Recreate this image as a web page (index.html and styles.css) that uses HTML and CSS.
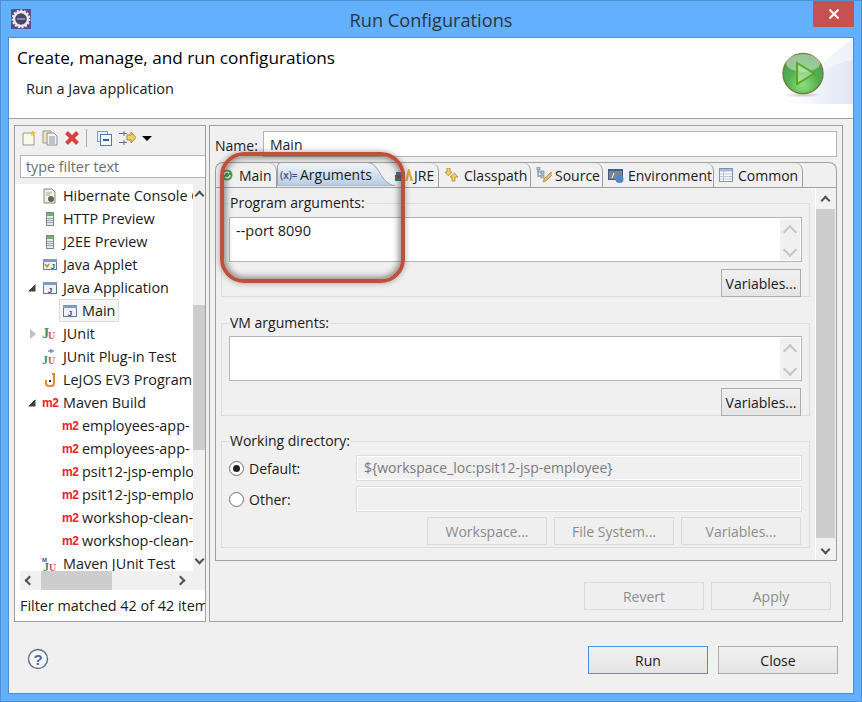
FILE: index.html
```html
<!DOCTYPE html>
<html lang="en">
<head>
    <meta charset="UTF-8">
    <title>Run Configurations</title>
    <link rel="stylesheet" href="styles.css">
</head>
<body>
<svg class="defs" width="0" height="0">
    <defs>
        <symbol id="i-java" viewBox="0 0 16 16">
            <rect x="1.500" y="2.500" width="13" height="11" fill="#eef2f8" stroke="#5f7896"/>
            <rect x="1" y="2" width="14" height="3" fill="#7f9cc0"/>
            <text x="8" y="12.500" font-size="8" font-weight="700" text-anchor="middle" fill="#2f4f7f" font-family="Liberation Sans">J</text>
        </symbol>
        <symbol id="i-server" viewBox="0 0 16 16">
            <rect x="4.500" y="1.500" width="7" height="13" fill="#e4e8ec" stroke="#7a8a80"/>
            <rect x="5" y="2" width="6" height="3" fill="#6cb26c"/>
            <path d="M5 7.500h6M5 9.500h6M5 11.500h6" stroke="#9aa6b2"/>
        </symbol>
        <symbol id="i-junit" viewBox="0 0 16 16">
            <text x="0" y="12" font-size="14" font-weight="700" fill="#3d8f5f" font-family="Liberation Serif">J</text>
            <text x="6" y="13" font-size="10" font-weight="700" fill="#d8505a" font-family="Liberation Serif">U</text>
        </symbol>
    </defs>
</svg>

<div class="window">
    <div class="titlebar">
        <svg width="20" height="20" viewBox="0 0 20 20">
            <rect width="20" height="20" fill="#5a4a86"/>
            <circle cx="10" cy="10" r="7" fill="#4a4468" stroke="#e8e8e8" stroke-width="2.400"/>
            <circle cx="10" cy="10" r="8.600" fill="none" stroke="#f4f4f4" stroke-width="1.600" stroke-dasharray="2 1.600"/>
            <rect x="6" y="9" width="8" height="2" fill="#8d86ac"/>
        </svg>
        <div class="title">Run Configurations</div>
        <div class="close">
            <svg width="10" height="10" viewBox="0 0 10 10"><path d="M0.500 0.500l9 9M9.500 0.500l-9 9" stroke="#fff" stroke-width="2"/></svg>
        </div>
    </div>

    <div class="client">
        <div class="header">
            <svg class="header-bg" width="74" height="66" viewBox="0 0 74 66">
                <defs>
                    <linearGradient id="hb" x1="0" y1="0" x2="1" y2="0">
                        <stop offset="0" stop-color="#fff"/>
                        <stop offset="1" stop-color="#dfe5f4"/>
                    </linearGradient>
                </defs>
                <path d="M0 66C20 50 44 22 74 0V66z" fill="url(#hb)" opacity=".55"/>
                <path d="M10 66C24 50 44 26 74 22V66z" fill="url(#hb)"/>
            </svg>
            <svg class="run-icon" width="44" height="50" viewBox="0 0 44 50">
                <defs>
                    <radialGradient id="rg" cx=".5" cy=".78" r=".8">
                        <stop offset="0" stop-color="#8fe07e"/>
                        <stop offset=".5" stop-color="#4fb04f"/>
                        <stop offset="1" stop-color="#57985a"/>
                    </radialGradient>
                    <radialGradient id="rs" cx=".5" cy=".5" r=".5">
                        <stop offset="0" stop-color="#999" stop-opacity=".55"/>
                        <stop offset="1" stop-color="#999" stop-opacity="0"/>
                    </radialGradient>
                </defs>
                <ellipse cx="22" cy="43" rx="20" ry="2.500" fill="url(#rs)"/>
                <circle cx="22" cy="21.500" r="20" fill="url(#rg)" stroke="#6f7f3a" stroke-width="1.400"/>
                <ellipse cx="22" cy="11" rx="17" ry="9" fill="#fff" opacity=".4"/>
                <path d="M16 11L33 21.500 16 32z" fill="#c2ecae" fill-opacity=".55" stroke="#5ea52e" stroke-width="2"/>
            </svg>
            <div class="header-title">Create, manage, and run configurations</div>
            <div class="header-sub">Run a Java application</div>
        </div>

        <div class="main">
            <div class="sidebar">
                <div class="toolbar">
                    <svg width="16" height="16" viewBox="0 0 16 16">
                        <path d="M2 3h8l3 3v9H2z" fill="#fbf8ec" stroke="#9a9a88"/>
                        <path d="M12 0l1 2 2 .5-1.500 1.500.3 2-1.800-1-1.800 1 .3-2L9 2.500l2-.5z" fill="#e9c04a"/>
                    </svg>
                    <svg class="t-dup" width="16" height="16" viewBox="0 0 16 16">
                        <path d="M1 1h8v12H1z" fill="#efe6c6" stroke="#a09a80"/>
                        <path d="M5 3h7l3 3v9H5z" fill="#f6f4ea" stroke="#8a8e9a"/>
                        <path d="M7 7h6M7 9h6M7 11h6M7 13h6" stroke="#7f93b4"/>
                    </svg>
                    <svg class="t-del" width="16" height="16" viewBox="0 0 16 16">
                        <path d="M2.500 2.500l11 11M13.500 2.500l-11 11" stroke="#d9403f" stroke-width="4"/>
                    </svg>
                    <span class="t-sep"></span>
                    <svg class="t-col" width="15" height="15" viewBox="0 0 15 15">
                        <rect x="0.500" y="0.500" width="10" height="10" fill="#e8f0f8" stroke="#7f9cc0"/>
                        <rect x="3.500" y="3.500" width="11" height="11" fill="#f4f8fc" stroke="#4f78a8"/>
                        <path d="M6 9h6" stroke="#2f5f98" stroke-width="2"/>
                    </svg>
                    <svg class="t-filter" width="17" height="16" viewBox="0 0 17 16">
                        <path d="M0 3.500h8M0 12.500h8" stroke="#5a7394"/>
                        <path d="M5 1v5M5 10v5" stroke="#5a7394"/>
                        <path d="M8 5h4V2l5 5.500-5 5.500v-3H8z" fill="#f3cf6a" stroke="#a98a2a"/>
                    </svg>
                    <span class="t-drop"></span>
                </div>
                <div class="filter-bar">
                    <div class="filter-box">type filter text</div>
                </div>
                <div class="tree-wrap">
                    <div class="tree">
                        <div class="row l1"><span class="twist"></span><span class="row-label"><svg width="16" height="16" viewBox="0 0 16 16"><path d="M2 1h8l3 3v11H2z" fill="#f4f1e4" stroke="#8a8a78"/><path d="M4 5h6M4 7h4" stroke="#9aa6b2"/><circle cx="9" cy="11" r="3" fill="#5a6a58"/></svg>Hibernate Console Configuration</span></div>
                        <div class="row l1"><span class="twist"></span><span class="row-label"><svg width="16" height="16"><use href="#i-server"/></svg>HTTP Preview</span></div>
                        <div class="row l1"><span class="twist"></span><span class="row-label"><svg width="16" height="16"><use href="#i-server"/></svg>J2EE Preview</span></div>
                        <div class="row l1"><span class="twist"></span><span class="row-label"><svg width="16" height="16" viewBox="0 0 16 16"><rect x="1.500" y="2.500" width="13" height="10" fill="#f2f0e6" stroke="#5f7896"/><rect x="1" y="2" width="14" height="3" fill="#7f9cc0"/><path d="M3 7l2 3 2-3" fill="none" stroke="#c08a3a" stroke-width="1.500"/><text x="11" y="12" font-size="7" font-weight="700" text-anchor="middle" fill="#2f4f7f" font-family="Liberation Sans">J</text></svg>Java Applet</span></div>
                        <div class="row l1"><span class="twist open"></span><span class="row-label"><svg width="16" height="16"><use href="#i-java"/></svg>Java Application</span></div>
                        <div class="row l2"><span class="row-label sel"><svg width="16" height="16"><use href="#i-java"/></svg>Main</span></div>
                        <div class="row l1"><span class="twist closed"></span><span class="row-label"><svg width="16" height="16"><use href="#i-junit"/></svg>JUnit</span></div>
                        <div class="row l1"><span class="twist"></span><span class="row-label"><svg width="16" height="16" viewBox="0 0 16 16"><path d="M6 2h6M9 0v4" stroke="#6f8fc0" stroke-width="1.500"/><text x="0" y="15" font-size="12" font-weight="700" fill="#3d8f5f" font-family="Liberation Serif">J</text><text x="6" y="15" font-size="10" font-weight="700" fill="#d8505a" font-family="Liberation Serif">U</text></svg>JUnit Plug-in Test</span></div>
                        <div class="row l1"><span class="twist"></span><span class="row-label"><svg width="16" height="16" viewBox="0 0 16 16"><path d="M10 2h2v9a3 3 0 0 1-3 3H7a3 3 0 0 1-3-3V8" fill="none" stroke="#e8862a" stroke-width="2"/><rect x="7" y="8" width="2" height="2" fill="#333"/></svg>LeJOS EV3 Program</span></div>
                        <div class="row l1"><span class="twist open"></span><span class="row-label"><span class="m2">m2</span>Maven Build</span></div>
                        <div class="row l2"><span class="row-label"><span class="m2">m2</span>employees-app-</span></div>
                        <div class="row l2"><span class="row-label"><span class="m2">m2</span>employees-app-</span></div>
                        <div class="row l2"><span class="row-label"><span class="m2">m2</span>psit12-jsp-employee</span></div>
                        <div class="row l2"><span class="row-label"><span class="m2">m2</span>psit12-jsp-employee</span></div>
                        <div class="row l2"><span class="row-label"><span class="m2">m2</span>workshop-clean-</span></div>
                        <div class="row l2"><span class="row-label"><span class="m2">m2</span>workshop-clean-</span></div>
                        <div class="row l1"><span class="twist"></span><span class="row-label"><svg width="16" height="16" viewBox="0 0 16 16"><text x="0" y="6" font-size="6" font-weight="700" fill="#34548c" font-family="Liberation Sans">M</text><text x="1" y="15" font-size="12" font-weight="700" fill="#3d8f5f" font-family="Liberation Serif">J</text><text x="7" y="15" font-size="10" font-weight="700" fill="#d8505a" font-family="Liberation Serif">U</text></svg>Maven JUnit Test</span></div>
                    </div>
                    <div class="tree-vscroll">
                        <span class="chev up"></span>
                        <span class="tree-thumb"></span>
                        <span class="chev down"></span>
                    </div>
                </div>
                <div class="hscroll">
                    <span class="chev left"></span>
                    <span class="hthumb"></span>
                    <span class="chev right"></span>
                </div>
                <div class="status">Filter matched 42 of 42 items</div>
            </div>

            <div class="editor">
                <div class="name-row">
                    <label class="name-label">Name:</label>
                    <div class="field name-field">Main</div>
                </div>
                <div class="folder">
                    <div class="tabs">
                        <div class="tab tab-main">
                            <svg width="12" height="14" viewBox="0 0 12 14"><circle cx="6" cy="7" r="5.500" fill="#46a04a"/><path d="M3 7a3 3 0 0 1 5-2M9 7a3 3 0 0 1-5 2" fill="none" stroke="#fff" stroke-width="1.300"/></svg>
                            Main
                        </div>
                        <div class="tab tab-args">
                            <svg class="tab-shape" width="118" height="24" viewBox="0 0 118 24">
                                <defs>
                                    <linearGradient id="tg" x1="0" y1="0" x2="0" y2="1">
                                        <stop offset="0" stop-color="#f4f7fb"/>
                                        <stop offset="1" stop-color="#b3cbe6"/>
                                    </linearGradient>
                                </defs>
                                <path d="M0.500 24V5Q0.500 0.500 5 0.500H90C98 0.500 102 10 106 16C110 21 114 23.500 118 23.500V24z" fill="url(#tg)" stroke="#a0a0a0"/>
                            </svg>
                            <span class="args-mark">(x)=</span>
                            <span class="tab-text">Arguments</span>
                        </div>
                        <div class="tab tab-jre">
                            <svg width="18" height="14" viewBox="0 0 18 14"><rect x="0" y="10" width="10" height="3" fill="#2f7f6f"/><rect x="0" y="7" width="10" height="3" fill="#8a4a3a"/><rect x="1" y="4" width="9" height="3" fill="#3f6f9f"/><path d="M10 13L13 1h1.500L18 13h-2.500l-1.500-6-1.500 6z" fill="#e0a83a"/></svg>
                            JRE
                        </div>
                        <div class="tab tab-cp">
                            <svg width="16" height="14" viewBox="0 0 16 14"><path d="M3 0h3v4h2L4.500 8 1 4h2z" fill="#f3cf6a" stroke="#a98a2a" stroke-width=".8"/><path d="M11 13h-3V9H6l4.500-4L14 9h-3z" fill="#f3cf6a" stroke="#a98a2a" stroke-width=".8"/></svg>
                            Classpath
                        </div>
                        <div class="tab tab-src">
                            <svg width="16" height="16" viewBox="0 0 16 16"><path d="M2 2v8M2 5h3M2 9h3" stroke="#6a7f9a" fill="none"/><rect x="1" y="0" width="3" height="3" fill="#b4c8e0" stroke="#5f7896" stroke-width=".6"/><rect x="5" y="4" width="3" height="3" fill="#b4c8e0" stroke="#5f7896" stroke-width=".6"/><rect x="5" y="8" width="3" height="3" fill="#b4c8e0" stroke="#5f7896" stroke-width=".6"/><path d="M7 15l1-3 7-7 2 2-7 7z" fill="#e8b85a" stroke="#a98a4a" stroke-width=".7"/></svg>
                            Source
                        </div>
                        <div class="tab tab-env">
                            <svg width="16" height="15" viewBox="0 0 16 15"><rect x="0" y="1" width="15" height="11" fill="#35608e"/><rect x="1" y="3" width="13" height="8" fill="#7c8692"/><path d="M4 10l2-5" stroke="#fff"/><circle cx="11.500" cy="11" r="4" fill="#4f86c6"/></svg>
                            Environment
                        </div>
                        <div class="tab tab-common">
                            <svg width="14" height="14" viewBox="0 0 14 14"><rect x="0.500" y="0.500" width="13" height="13" fill="#fdfdf8" stroke="#7f93b4"/><rect x="1" y="1" width="12" height="2.500" fill="#a8bcd8"/><path d="M1 6h12M1 8.500h12M1 11h12M4.500 3v10" stroke="#b8c4d4"/></svg>
                            Common
                        </div>
                    </div>
                    <div class="folder-body">
                        <div class="folder-content">
                            <fieldset class="group">
                                <legend>Program arguments:</legend>
                                <div class="textarea">
                                    <div class="textarea-text">--port 8090</div>
                                    <div class="ta-scroll"><span class="chev up faint"></span><span class="chev down faint"></span></div>
                                </div>
                                <div class="btn-row"><button class="btn btn-var">Variables...</button></div>
                            </fieldset>
                            <fieldset class="group group-vm">
                                <legend>VM arguments:</legend>
                                <div class="textarea">
                                    <div class="textarea-text"></div>
                                    <div class="ta-scroll"><span class="chev up faint"></span><span class="chev down faint"></span></div>
                                </div>
                                <div class="btn-row"><button class="btn btn-var">Variables...</button></div>
                            </fieldset>
                            <fieldset class="group group-wd">
                                <legend>Working directory:</legend>
                                <div class="wd-row">
                                    <span class="radio checked"></span>
                                    <span class="wd-label">Default:</span>
                                    <div class="field field-off">${workspace_loc:psit12-jsp-employee}</div>
                                </div>
                                <div class="wd-row">
                                    <span class="radio"></span>
                                    <span class="wd-label">Other:</span>
                                    <div class="field field-off"></div>
                                </div>
                                <div class="btn-row wd-buttons">
                                    <button class="btn btn-off">Workspace...</button>
                                    <button class="btn btn-off">File System...</button>
                                    <button class="btn btn-off">Variables...</button>
                                </div>
                            </fieldset>
                        </div>
                        <div class="vscroll">
                            <span class="chev up"></span>
                            <span class="vthumb"></span>
                            <span class="chev down"></span>
                        </div>
                    </div>
                </div>
                <div class="apply-row">
                    <button class="btn btn-off">Revert</button>
                    <button class="btn btn-off">Apply</button>
                </div>
            </div>
        </div>

        <div class="footer">
            <svg class="help" width="22" height="22" viewBox="0 0 22 22">
                <circle cx="11" cy="11" r="9.500" fill="#f6f7fa" stroke="#5f6f8f" stroke-width="1.400"/>
                <text x="11" y="16.500" font-size="15" font-weight="700" text-anchor="middle" fill="#56678a" font-family="Liberation Sans">?</text>
            </svg>
            <div class="footer-btns">
                <button class="btn btn-foot btn-default">Run</button>
                <button class="btn btn-foot">Close</button>
            </div>
        </div>
    </div>

    <div class="callout"></div>
</div>
</body>
</html>
```

FILE: styles.css
```css
*{
    box-sizing: border-box;
    margin: 0;
    padding: 0;
}
body{
    font-family: "Open Sans", "Noto Sans", sans-serif;
    font-size: 14px;
    color: #1a1a1a;
    background: #fff;
}
.defs{
    position: absolute;
}
.window{
    position: relative;
    width: 862px;
    height: 702px;
    background: #63b0ff;
    border: 1px solid #4f8fd0;
    padding: 0 7px 7px;
    display: flex;
    flex-direction: column;
    overflow: hidden;
}

/* title bar */
.titlebar{
    height: 36px;
    display: flex;
    align-items: center;
    position: relative;
    padding-left: 3px;
}
.title{
    flex: 1;
    text-align: center;
    font-size: 18.200px;
    color: #2b3440;
    margin-right: 23px;
    margin-top: 1px;
}
.close{
    position: absolute;
    right: 0;
    top: 0;
    width: 41px;
    height: 26px;
    background: #c75050;
    display: flex;
    align-items: center;
    justify-content: center;
}

.client{
    flex: 1;
    background: #f0f0f0;
    border: 1px solid #4f8fd0;
    display: flex;
    flex-direction: column;
    min-height: 0;
}

/* white header */
.header{
    position: relative;
    height: 81px;
    background: #fff;
    border-bottom: 1px solid #a0a0a0;
    padding: 9px 8px 0;
}
.header-bg{
    position: absolute;
    right: 0;
    top: 0;
}
.run-icon{
    position: absolute;
    right: 28px;
    top: 14px;
}
.header-title{
    font-size: 17.200px;
    line-height: 22px;
    color: #000;
}
.header-sub{
    margin: 9px 0 0 9px;
    line-height: 22px;
    font-size: 14.500px;
}

.main{
    flex: none;
    height: 503px;
    display: flex;
    gap: 3px;
    padding: 6px 0 0 5px;
}

/* left tree */
.sidebar{
    width: 192px;
    height: 497px;
    background: #fff;
    border: 1px solid #a0a0a0;
    display: flex;
    flex-direction: column;
}
.toolbar{
    height: 24px;
    background: #f0f0f0;
    display: flex;
    align-items: center;
    padding-left: 6px;
}
.toolbar svg{
    margin-right: 5px;
}
.toolbar .t-dup,
.toolbar .t-del,
.toolbar .t-filter{
    margin-right: 6px;
}
.toolbar .t-col{
    margin-right: 7px;
}
.t-sep{
    width: 1px;
    height: 18px;
    background: #a8a8a8;
    margin-right: 10px;
}
.t-drop{
    width: 0;
    height: 0;
    border: 5px solid transparent;
    border-top: 5px solid #000;
    border-bottom: 0;
}
.filter-bar{
    height: 34px;
    background: #f0f0f0;
    padding: 5px 0 0 5px;
}
.filter-box{
    height: 23px;
    background: #fff;
    border: 1px solid #b4b4b4;
    border-right: 0;
    padding-left: 5px;
    line-height: 21px;
    font-size: 14.300px;
    color: #6d6d6d;
}
.tree-wrap{
    height: 387px;
    display: flex;
}
.tree{
    flex: 1;
    min-width: 0;
    overflow: hidden;
    font-size: 14.400px;
}
.row{
    height: 23px;
    display: flex;
    align-items: center;
    white-space: nowrap;
}
.row.l1{
    padding-left: 12px;
}
.row.l2{
    padding-left: 44px;
}
.twist{
    width: 10px;
    height: 10px;
    margin-right: 2px;
    flex-shrink: 0;
}
.twist.open{
    background: linear-gradient(135deg, transparent 50%, #404040 50%);
    transform: scale(.7);
}
.twist.closed{
    width: 0;
    height: 0;
    border-left: 6px solid #c0c0c0;
    border-top: 5px solid transparent;
    border-bottom: 5px solid transparent;
    margin-right: 3px;
    margin-left: 3px;
}
.row-label{
    display: inline-flex;
    align-items: center;
    height: 23px;
    border: 1px solid transparent;
    padding: 0 3px 0 2px;
    gap: 5px;
}
.row-label svg{
    flex-shrink: 0;
}
.l2 .row-label{
    gap: 4px;
}
.row-label.sel{
    background: #f5f5f5;
    border-color: #dcdcdc;
}
.m2{
    width: 16px;
    font-family: "Liberation Sans", sans-serif;
    font-size: 12px;
    font-weight: 700;
    color: #e8232a;
    flex-shrink: 0;
    letter-spacing: -0.300px;
}
.tree-vscroll{
    width: 12px;
    background: #f0f0f0;
    position: relative;
    display: flex;
    flex-direction: column;
    justify-content: space-between;
    align-items: center;
    padding: 8px 0;
}
.tree-thumb{
    position: absolute;
    left: 0;
    right: 0;
    top: 121px;
    height: 145px;
    background: #cdcdcd;
}
.chev{
    width: 7px;
    height: 7px;
    display: block;
    border-top: 2px solid #505050;
    border-left: 2px solid #505050;
    flex-shrink: 0;
}
.chev.up{
    transform: rotate(45deg);
}
.chev.down{
    transform: rotate(225deg);
}
.chev.left{
    transform: rotate(-45deg);
}
.chev.right{
    transform: rotate(135deg);
}
.chev.faint{
    width: 10px;
    height: 10px;
    border-color: #c4c4c4;
}
.hscroll{
    height: 19px;
    margin-left: 5px;
    background: #f0f0f0;
    position: relative;
    display: flex;
    align-items: center;
    justify-content: space-between;
    padding: 0 21px 0 6px;
}
.hthumb{
    position: absolute;
    left: 21px;
    top: 0;
    bottom: 0;
    width: 71px;
    background: #cdcdcd;
}
.status{
    padding: 5px 0 0 5px;
    line-height: 22px;
    font-size: 14.400px;
    white-space: nowrap;
    overflow: hidden;
}

/* right side */
.editor{
    width: 634px;
    height: 497px;
    border: 1px solid #a0a0a0;
    padding: 5px 5px 0;
    display: flex;
    flex-direction: column;
}
.name-row{
    display: flex;
    align-items: center;
    gap: 6px;
    height: 26px;
}
.name-label{
    width: 42px;
    padding-top: 2px;
}
.field{
    flex: 1;
    height: 26px;
    background: #fff;
    border: 1px solid #b4b4b4;
    padding-left: 6px;
    line-height: 26px;
}
.folder{
    margin-top: 5px;
    height: 399px;
    display: flex;
    flex-direction: column;
}
.tabs{
    height: 25px;
    display: flex;
    border-top: 1px solid #a0a0a0;
    border-right: 1px solid #a0a0a0;
    border-left: 1px solid #a0a0a0;
    border-radius: 8px 8px 0 0;
}
.tab{
    position: relative;
    display: flex;
    align-items: center;
    gap: 4px;
    height: 24px;
    padding-left: 5px;
    border-right: 1px solid #a0a0a0;
    border-radius: 0 8px 0 0;
    flex-shrink: 0;
}
.tab-main{
    width: 61px;
    gap: 6px;
}
.tab-args{
    width: 118px;
    border-right: 0;
    padding-left: 3px;
    margin-top: -1px;
    height: 25px;
}
.tab-shape{
    position: absolute;
    left: 0;
    top: 0;
}
.args-mark{
    position: relative;
    font-size: 10px;
    font-weight: 600;
    color: #44507a;
    width: 16px;
    white-space: nowrap;
}
.tab-text{
    position: relative;
}
.tab-jre{
    width: 44px;
    padding-left: 0;
    gap: 1px;
}
.tab-cp{
    width: 92px;
}
.tab-src{
    width: 72px;
    gap: 3px;
}
.tab-env{
    width: 111px;
}
.tab-common{
    width: 89px;
    gap: 5px;
}
.folder-body{
    flex: 1;
    border: 1px solid #a0a0a0;
    display: flex;
    min-height: 0;
}
.folder-content{
    flex: 1;
    padding: 5px 5px 0 5px;
}
.group{
    border: 1px solid #dcdcdc;
    padding: 4px 7px 8px;
    margin-bottom: 16px;
    height: 104px;
}
.group legend{
    padding: 0 1px;
    line-height: 20px;
}
.group-vm{
    height: 103px;
    margin-bottom: 15px;
    padding-top: 3px;
}
.group-wd{
    height: 117px;
    margin-bottom: 0;
}
.textarea{
    height: 45px;
    background: #fff;
    border: 1px solid #b4b4b4;
    display: flex;
}
.textarea-text{
    flex: 1;
    padding: 3px 6px;
    font-size: 14.500px;
}
.ta-scroll{
    width: 20px;
    margin: 1px;
    background: #f0f0f0;
    display: flex;
    flex-direction: column;
    align-items: center;
    justify-content: space-between;
    padding: 8px 0 5px;
}
.btn-row{
    display: flex;
    justify-content: flex-end;
    gap: 7px;
    margin-top: 7px;
    padding-right: 1px;
}
.btn{
    font-family: inherit;
    font-size: 14px;
    color: #1a1a1a;
    height: 28px;
    width: 120px;
    border: 1px solid #adadad;
    background: linear-gradient(#f0f0f0, #e5e5e5);
}
.btn-var{
    width: 80px;
}
.btn-off{
    background: #efefef;
    border-color: #d9d9d9;
    color: #8c8c8c;
}
.wd-row{
    display: flex;
    align-items: center;
    height: 26px;
    margin-bottom: 5px;
}
.radio{
    width: 15px;
    height: 15px;
    border: 1px solid #707070;
    border-radius: 50%;
    background: #fff;
    margin-right: 5px;
    position: relative;
    flex-shrink: 0;
}
.radio.checked::after{
    content: "";
    position: absolute;
    left: 3px;
    top: 3px;
    width: 7px;
    height: 7px;
    border-radius: 50%;
    background: #222;
}
.wd-label{
    width: 107px;
}
.field-off{
    background: #f0f0f0;
    border-color: #dcdcdc;
    box-shadow: inset 0 0 0 1px #fff;
    color: #7a7a7a;
    padding-left: 7px;
    line-height: 24px;
}
.wd-buttons{
    margin-top: 3px;
}
.vscroll{
    width: 20px;
    margin-right: 1px;
    background: #f0f0f0;
    border-left: 1px solid #fff;
    position: relative;
    display: flex;
    flex-direction: column;
    align-items: center;
    justify-content: space-between;
    padding: 9px 0 7px;
}
.vthumb{
    position: absolute;
    left: 0;
    right: 0;
    top: 21px;
    height: 329px;
    background: #cdcdcd;
}
.apply-row{
    display: flex;
    justify-content: flex-end;
    gap: 7px;
    margin-top: 21px;
    padding-right: 6px;
}

/* bottom buttons */
.footer{
    flex: 1;
    display: flex;
    align-items: flex-start;
    justify-content: space-between;
    padding: 24px 15px 0 18px;
}
.help{
    margin-top: 2px;
}
.footer-btns{
    display: flex;
    gap: 10px;
}
.btn-default{
    border-color: #3f93e8;
}

/* red hand drawn highlight over the tabs */
.callout{
    position: absolute;
    left: 219px;
    top: 151px;
    width: 185px;
    height: 131px;
    border: 4px solid #c0503a;
    border-radius: 24px;
    box-shadow: inset 0 0 6px 2px rgba(60, 60, 60, .6), 0 0 5px 1px rgba(60, 60, 60, .35);
}
```
